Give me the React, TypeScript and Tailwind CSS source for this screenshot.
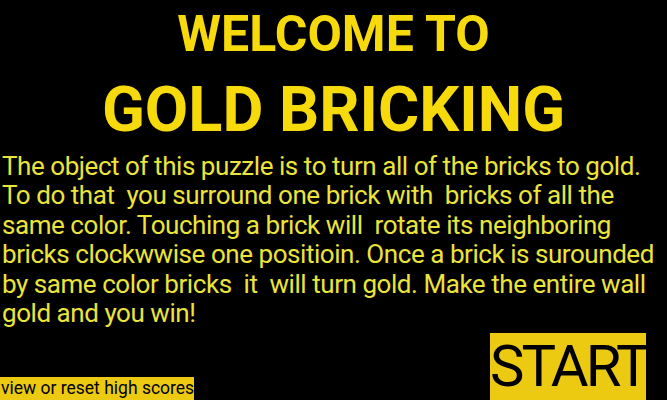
import React from "react"

const App = () => {
  return (
    <div className="w-[667px] h-[400px] bg-black overflow-hidden flex flex-col font-['Roboto',sans-serif]">
      <div className="flex flex-col items-center">
        <h1 className="mt-[7px] text-[50px] leading-[54px] font-bold text-[#f6da0c]">WELCOME TO</h1>
        <h2 className="mt-[16px] text-[63px] leading-[66px] font-bold text-[#f6da0c]">GOLD BRICKING</h2>
      </div>
      <p className="mt-[9px] pl-[2px] text-[26px] leading-[29.4px] text-[#ebe43a] tracking-[-0.45px]">
        The object of this puzzle is to turn all of the bricks to gold.
        <br />
        To do that&nbsp; you surround one brick with&nbsp; bricks of all the
        <br />
        same color. Touching a brick will&nbsp; rotate its neighboring
        <br />
        bricks clockwwise one positioin. Once a brick is surounded
        <br />
        by same color bricks&nbsp; it&nbsp; will turn gold. Make the entire wall
        <br />
        gold and you win!
      </p>
      <div className="mt-auto flex items-end justify-between">
        <button className="h-[23px] w-[194px] bg-[#ecca12] text-black text-[17.5px] leading-[23px] text-left pl-[1px] whitespace-nowrap">
          view or reset high scores
        </button>
        <button className="mr-[21px] h-[67px] w-[156px] bg-[#ecca12] text-black text-[58px] leading-[67px] tracking-[-3px]">
          START
        </button>
      </div>
    </div>
  )
}

export default App
